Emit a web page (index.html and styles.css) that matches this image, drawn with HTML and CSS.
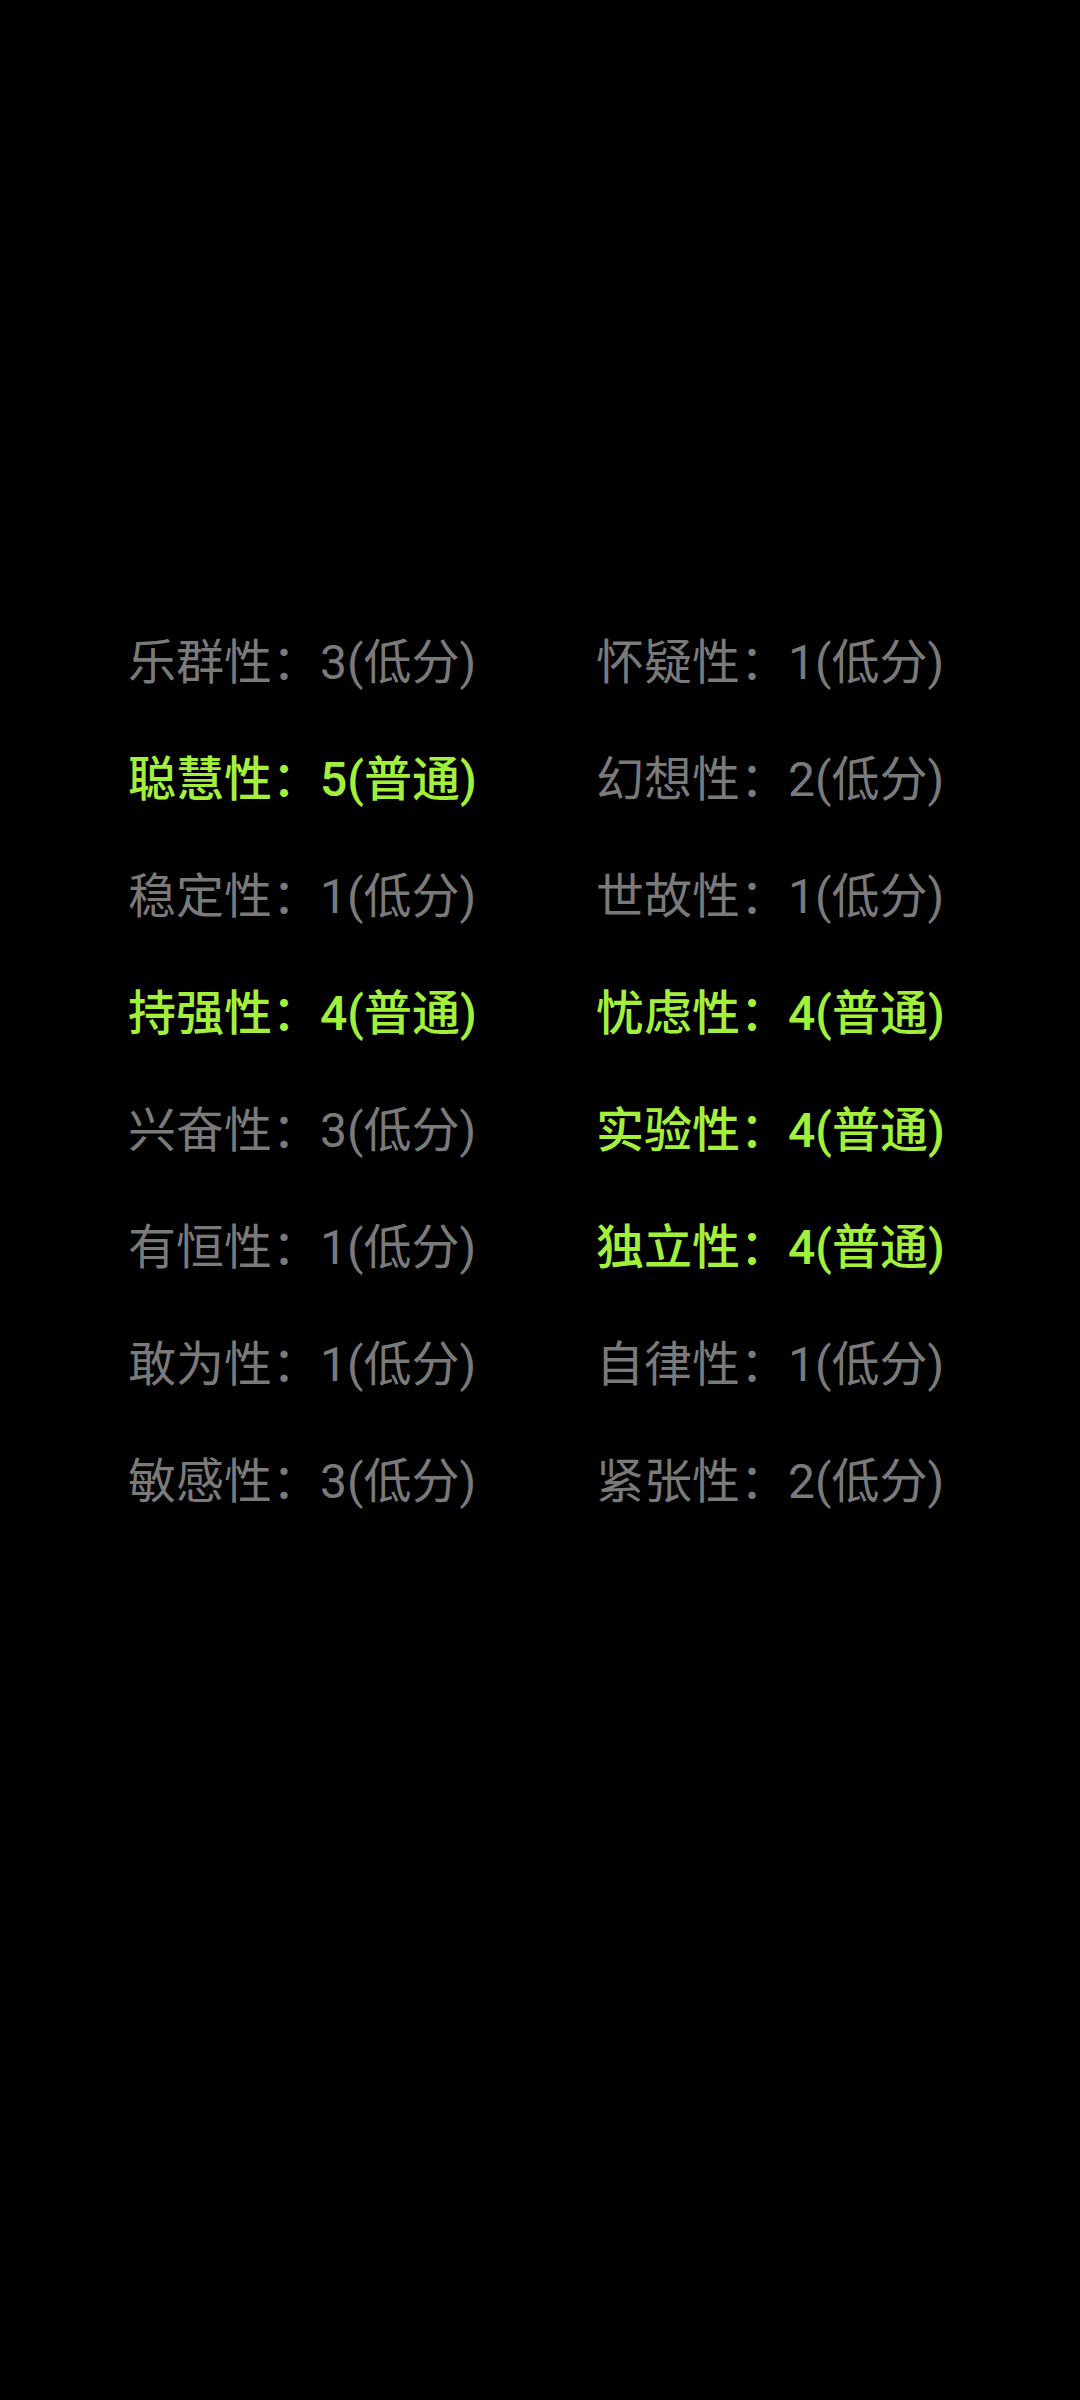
FILE: index.html
```html
<!DOCTYPE html>
<html lang="zh-CN">
<head>
    <meta charset="UTF-8">
    <meta name="viewport" content="width=device-width, initial-scale=1.0">
    <title>16PF 结果</title>
    <link rel="stylesheet" href="styles.css">
</head>
<body>
    <div class="traits">
        <div class="trait">乐群性：3(低分)</div>
        <div class="trait">怀疑性：1(低分)</div>
        <div class="trait high">聪慧性：5(普通)</div>
        <div class="trait">幻想性：2(低分)</div>
        <div class="trait">稳定性：1(低分)</div>
        <div class="trait">世故性：1(低分)</div>
        <div class="trait high">持强性：4(普通)</div>
        <div class="trait high">忧虑性：4(普通)</div>
        <div class="trait">兴奋性：3(低分)</div>
        <div class="trait high">实验性：4(普通)</div>
        <div class="trait">有恒性：1(低分)</div>
        <div class="trait high">独立性：4(普通)</div>
        <div class="trait">敢为性：1(低分)</div>
        <div class="trait">自律性：1(低分)</div>
        <div class="trait">敏感性：3(低分)</div>
        <div class="trait">紧张性：2(低分)</div>
    </div>
</body>
</html>
```

FILE: styles.css
```css
html, body {
    margin: 0;
    padding: 0;
    background-color: #000;
}
body {
    width: 1080px;
    height: 2400px;
    font-family: Roboto, "Noto Sans CJK SC", sans-serif;
}
.traits {
    display: grid;
    grid-template-columns: 468px 468px;
    grid-auto-rows: 117px;
    padding: 604px 0 0 128px;
}
.trait {
    font-size: 48px;
    line-height: 117px;
    color: #7a7a7a;
    white-space: nowrap;
}
.high {
    color: #a2f03c;
    font-weight: 500;
}
```
